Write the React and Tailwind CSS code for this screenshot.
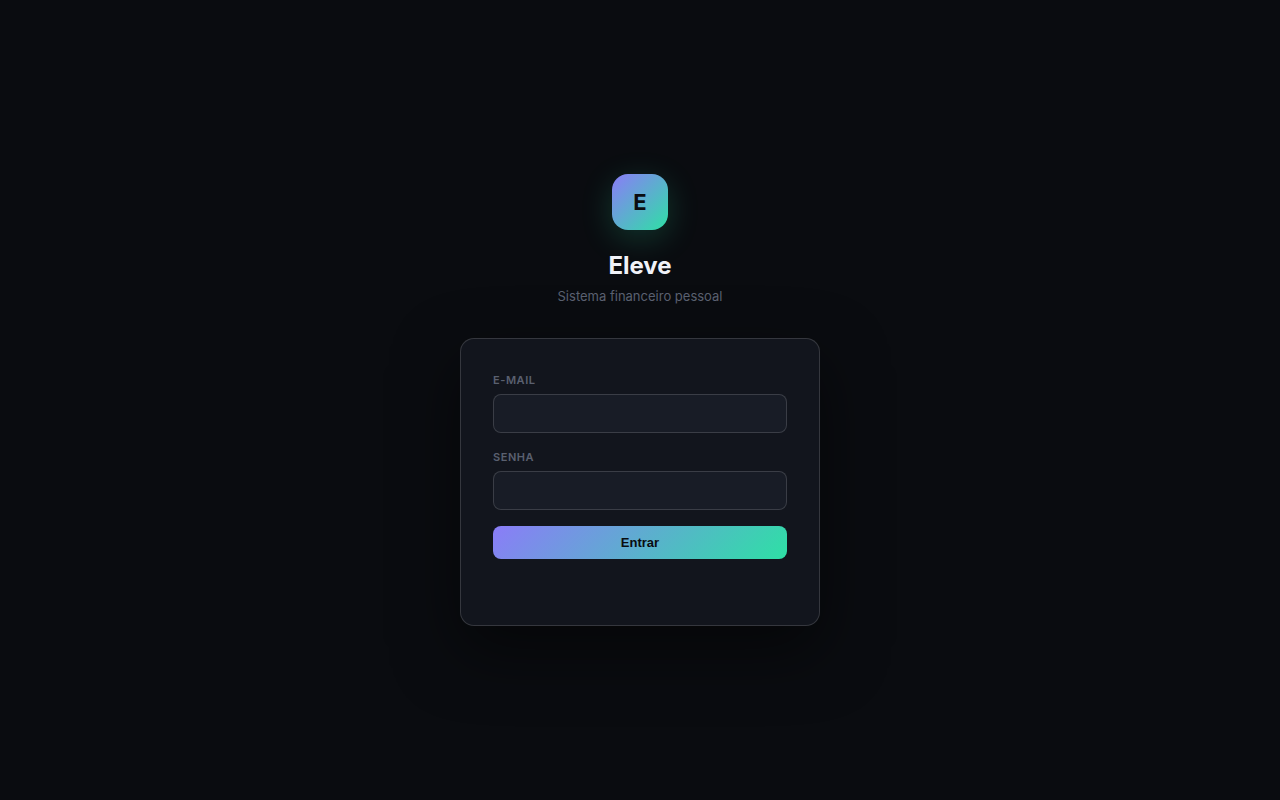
import React, { useState } from 'react';

const inputClass =
    'h-[39px] w-full rounded-lg border border-white/15 bg-[#181c26] px-3 text-sm text-[#f0f2f8] outline-none focus:border-[#8b7cf8]';
const labelClass = 'mb-1.5 block text-[11px] leading-4 font-semibold tracking-wider uppercase text-[#5a6070]';

function Field({ id, label, type, value, onChange }) {
    return (
        <div className="mb-4">
            <label htmlFor={id} className={labelClass}>{label}</label>
            <input id={id} type={type} value={value} onChange={(e) => onChange(e.target.value)} className={inputClass} />
        </div>
    );
}

export default function App() {
    const [email, setEmail] = useState('');
    const [password, setPassword] = useState('');

    return (
        <main className="flex min-h-screen items-center justify-center bg-[#0a0c10] font-['Inter',sans-serif] text-[#f0f2f8]">
            <div className="w-full max-w-[360px]">
                {/* Brand */}
                <div className="mb-8 text-center">
                    <div className="mx-auto mb-4 flex size-14 items-center justify-center rounded-2xl bg-linear-135/srgb from-[#8b7cf8] to-[#2ee0a5] text-[22px] font-bold text-[#0a0c10] shadow-[0_8px_32px_rgba(46,224,165,0.2)]">
                        E
                    </div>
                    <h1 className="text-2xl leading-10 font-bold">Eleve</h1>
                    <p className="text-[13px] leading-5 text-[#5a6070]">Sistema financeiro pessoal</p>
                </div>

                <form
                    onSubmit={(e) => e.preventDefault()}
                    className="rounded-[14px] border border-white/15 bg-[#12151d] px-8 pt-[33px] pb-[66px] shadow-[0_24px_64px_rgba(0,0,0,0.5)]"
                >
                    <Field id="email" label="E-mail" type="email" value={email} onChange={setEmail} />
                    <Field id="senha" label="Senha" type="password" value={password} onChange={setPassword} />
                    <button
                        type="submit"
                        className="block h-[33px] w-full rounded-lg bg-linear-135/srgb from-[#8b7cf8] to-[#2ee0a5] font-['Liberation_Sans',sans-serif] text-[13px] font-bold text-[#0a0c10]"
                    >
                        Entrar
                    </button>
                </form>
            </div>
        </main>
    );
}
